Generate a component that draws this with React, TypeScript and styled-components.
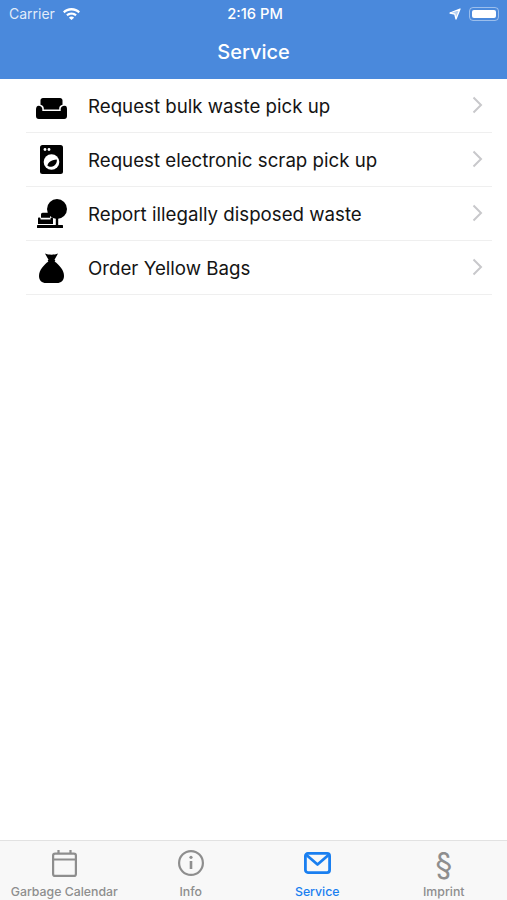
import React from 'react';
import styled, { createGlobalStyle } from 'styled-components';

const GlobalStyle = createGlobalStyle`
  html, body {
    margin: 0;
    padding: 0;
    background: #ffffff;
  }
  body {
    font-family: "Inter", "Liberation Sans", sans-serif;
  }
`;

const SofaIcon = () => (
  <svg width="31" height="27" viewBox="0 -6 31 27" fill="#000">
    <path d="M4.500 2.500C4.500 1 5.500 0 7 0h17c1.500 0 2.500 1 2.500 2.500V6.800c-2 .4-3.300 1.800-3.300 3.600v1H7.800v-1C7.800 8.600 6.500 7.200 4.500 6.800z" />
    <path d="M2.500 7.800C4.700 7.800 6.300 9.200 6.300 11v2h18.400v-2c0-1.800 1.600-3.200 3.800-3.200S31 9.500 31 11.500V18c0 1.800-1 3-2.800 3H2.800C1 21 0 19.800 0 18v-6.500C0 9.500 1 7.800 2.500 7.800z" />
  </svg>
);

const WasherIcon = () => (
  <svg width="23" height="29" viewBox="0 0 23 29">
    <rect width="23" height="29" rx="2.500" fill="#000" />
    <circle cx="5" cy="4.500" r="1.400" fill="#fff" />
    <circle cx="9" cy="4.500" r="1.400" fill="#fff" />
    <circle cx="11.500" cy="17" r="7.800" fill="#fff" />
    <path d="M16.800 14.500c.6 3.500-2 6.800-5.500 7.300-1.500.1-3-.3-4-1.200 1-3 3-4.800 5.500-5.400 1.500-.3 2.800-.5 4-.7z" fill="#000" />
  </svg>
);

const TreeIcon = () => (
  <svg width="30" height="29" viewBox="0 0 30 29" fill="#000">
    <circle cx="20" cy="10" r="10" />
    <rect x="18.800" y="17" width="2.400" height="9" />
    <rect x="0" y="26" width="26" height="3" rx=".5" />
    <path d="M4 15.500c0-1 .7-1.700 1.700-1.700h5.600c1 0 1.700.7 1.700 1.700v3.300H4z" />
    <path d="M2 18.500c1 0 1.500.5 1.500 1.300v.7h10v-.7c0-.8.500-1.300 1.200-1.300s1.300.5 1.300 1.300V25H1v-5.200c0-.8.300-1.300 1-1.300z" />
  </svg>
);

const BagIcon = () => (
  <svg width="25" height="30" viewBox="0 0 25 30" fill="#000">
    <path d="M6 .5c2 .8 4 1.200 6.500 1.200S17 1.300 19 .5l-3.500 6.300c1 .4 1 1.400 0 1.800 5 3.400 9.500 9 9.500 14.400 0 4.500-3 7-7 7H7c-4 0-7-2.500-7-7C0 17.600 4.500 12 9.500 8.600c-1-.4-1-1.400 0-1.800z" />
  </svg>
);

const CalendarIcon = () => (
  <svg width="25" height="27" viewBox="0 0 25 27" fill="none" stroke="#8e8e8e" strokeWidth="2.200">
    <rect x="1.100" y="3.600" width="22.800" height="22.300" rx="2" />
    <path d="M1.100 9.500h22.800M6.500 0v3.600M18.500 0v3.600" />
  </svg>
);

const InfoIcon = () => (
  <svg width="26" height="26" viewBox="0 0 26 26" fill="none" stroke="#8e8e8e" strokeWidth="2.200">
    <circle cx="13" cy="13" r="11.900" />
    <path d="M13 11v8" strokeWidth="2.600" />
    <circle cx="13" cy="7.300" r="1.600" fill="#8e8e8e" stroke="none" />
  </svg>
);

const MailIcon = () => (
  <svg width="27" height="24" viewBox="0 -2 27 24" fill="none" stroke="#1a7ff0" strokeWidth="2.800" strokeLinejoin="round">
    <rect x="1.400" y="1.400" width="24.200" height="19.200" rx="2.500" />
    <path d="M2.500 3l11 9.500L24.500 3" />
  </svg>
);

const WifiIcon = () => (
  <svg width="17" height="12" viewBox="0 0 17 12" fill="#fff">
    <path d="M8.500 0C12 0 15 1.300 17 3.500l-1.600 1.700C13.700 3.400 11.300 2.400 8.500 2.400S3.300 3.400 1.600 5.200L0 3.500C2 1.300 5 0 8.500 0z" />
    <path d="M8.500 4.400c2.100 0 4 .8 5.300 2.200l-1.600 1.700c-.9-1-2.200-1.500-3.700-1.500s-2.800.5-3.700 1.500L3.200 6.600C4.500 5.200 6.400 4.400 8.500 4.400z" />
    <path d="M8.500 8.600c1.100 0 2 .4 2.600 1.100L8.500 12 5.900 9.700c.6-.7 1.500-1.100 2.600-1.100z" />
  </svg>
);

const LocationIcon = () => (
  <svg width="12" height="12" viewBox="0 0 12 12" fill="none" stroke="#fff" strokeWidth="1.300" strokeLinejoin="round">
    <path d="M11 1L7 11 5.800 6.200 1 5z" fill="rgba(255,255,255,0.6)" />
  </svg>
);

const Screen = styled.div`
  width: 507px;
  height: 900px;
  display: flex;
  flex-direction: column;
  overflow: hidden;
  background: #ffffff;
`;

const Header = styled.header`
  height: 79px;
  flex: none;
  display: flex;
  flex-direction: column;
  background: #4a89dc;
  color: #ffffff;
`;

const StatusBar = styled.div`
  height: 27px;
  padding: 0 6px 0 9px;
  display: grid;
  grid-template-columns: 1fr auto 1fr;
  align-items: center;
  font-size: 14px;
`;

const Carrier = styled.div`
  display: flex;
  align-items: center;
  gap: 8px;
  color: rgba(255, 255, 255, 0.85);
`;

const Clock = styled.div`
  font-size: 14.700px;
  font-weight: 500;
`;

const StatusRight = styled.div`
  display: flex;
  justify-content: flex-end;
  align-items: center;
  gap: 8px;
`;

const Battery = styled.div`
  width: 30px;
  height: 14px;
  padding: 2px;
  box-sizing: border-box;
  border: 1px solid rgba(255, 255, 255, 0.45);
  border-radius: 4px;
  margin-right: 2px;

  &::before {
    content: '';
    display: block;
    width: 100%;
    height: 100%;
    background: #ffffff;
    border-radius: 2px;
  }
`;

const Title = styled.h1`
  margin: 0;
  flex: 1;
  padding-bottom: 2px;
  display: flex;
  align-items: center;
  justify-content: center;
  font-size: 20px;
  font-weight: 500;
`;

const List = styled.main`
  flex: 1;
`;

const Row = styled.div`
  height: 53px;
  margin: 0 15px 0 26px;
  display: flex;
  align-items: center;
  border-bottom: 1px solid #efefef;
`;

const RowIcon = styled.div`
  width: 51px;
  margin-right: 11px;
  display: flex;
  justify-content: center;
`;

const RowLabel = styled.div`
  flex: 1;
  padding-top: 2px;
  font-size: 18.700px;
  color: #141414;
`;

const Chevron = styled.svg`
  margin-right: 9px;
  margin-bottom: 2px;
`;

const TabBar = styled.nav`
  height: 59px;
  flex: none;
  padding-left: 1px;
  display: grid;
  grid-template-columns: repeat(4, 1fr);
  background: #f8f8f8;
  border-top: 1px solid #e2e2e2;
`;

const Tab = styled.div<{ $active?: boolean }>`
  display: flex;
  flex-direction: column;
  align-items: center;
  font-size: 12.300px;
  font-weight: 500;
  color: ${({ $active }) => ($active ? '#1a7ff0' : '#8e8e8e')};
`;

const TabIcon = styled.div`
  height: 43px;
  padding-top: 9px;
  box-sizing: border-box;
  display: flex;
  align-items: flex-start;
  justify-content: center;
  font-size: 31px;
  font-weight: 400;
  line-height: 28px;
`;

const rows = [
  { label: 'Request bulk waste pick up', icon: <SofaIcon /> },
  { label: 'Request electronic scrap pick up', icon: <WasherIcon /> },
  { label: 'Report illegally disposed waste', icon: <TreeIcon /> },
  { label: 'Order Yellow Bags', icon: <BagIcon /> },
];

const tabs = [
  { label: 'Garbage Calendar', icon: <CalendarIcon /> },
  { label: 'Info', icon: <InfoIcon /> },
  { label: 'Service', icon: <MailIcon />, active: true },
  { label: 'Imprint', icon: '§' },
];

const App: React.FC = () => (
  <Screen>
    <GlobalStyle />
    <Header>
      <StatusBar>
        <Carrier>
          Carrier
          <WifiIcon />
        </Carrier>
        <Clock>2:16 PM</Clock>
        <StatusRight>
          <LocationIcon />
          <Battery />
        </StatusRight>
      </StatusBar>
      <Title>Service</Title>
    </Header>
    <List>
      {rows.map((row) => (
        <Row key={row.label}>
          <RowIcon>{row.icon}</RowIcon>
          <RowLabel>{row.label}</RowLabel>
          <Chevron width="11" height="18" viewBox="0 0 11 18" fill="none" stroke="#c8c8cb" strokeWidth="2">
            <path d="M1.500 1.500L9 9l-7.500 7.500" />
          </Chevron>
        </Row>
      ))}
    </List>
    <TabBar>
      {tabs.map((tab) => (
        <Tab key={tab.label} $active={tab.active}>
          <TabIcon>{tab.icon}</TabIcon>
          {tab.label}
        </Tab>
      ))}
    </TabBar>
  </Screen>
);

export default App;
